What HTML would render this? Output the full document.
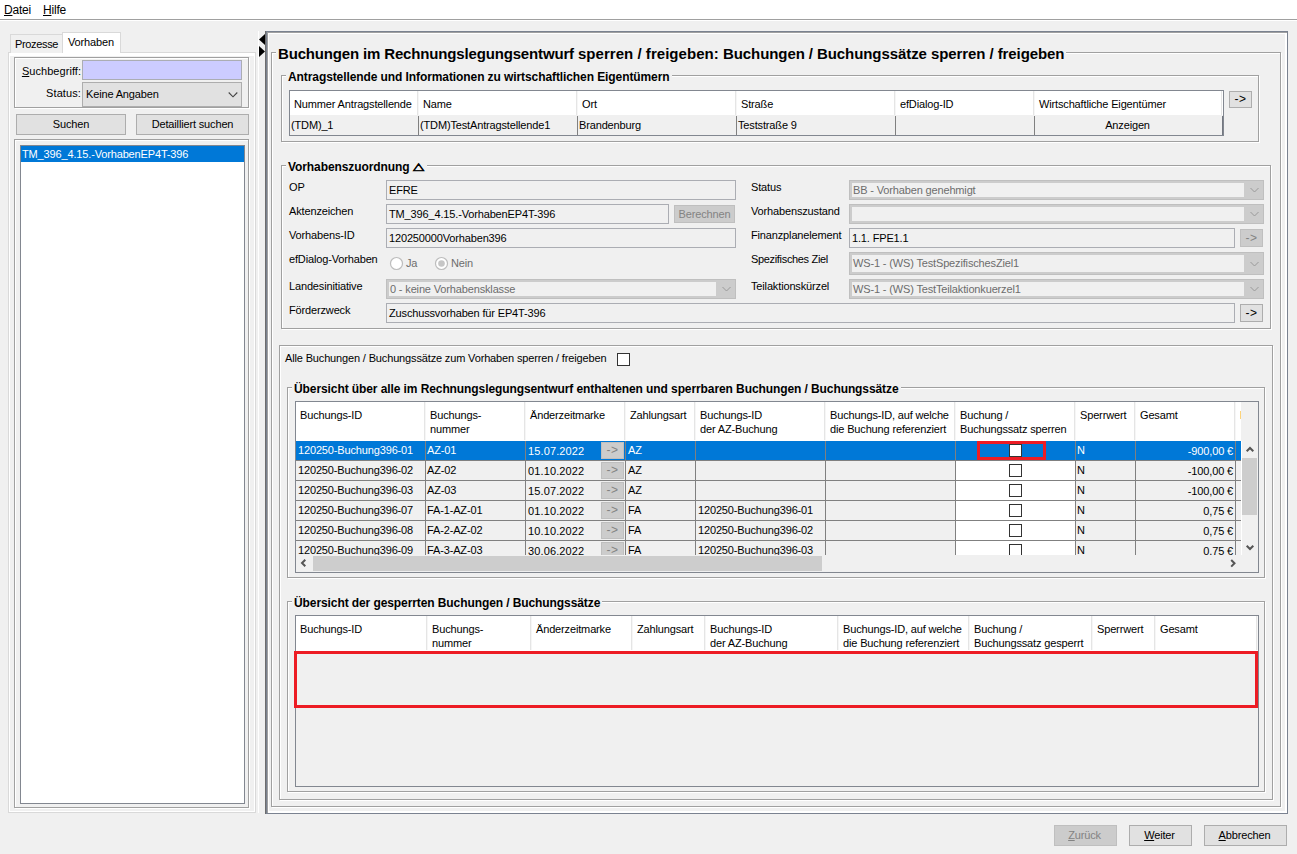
<!DOCTYPE html>
<html><head><meta charset="utf-8"><title>Buchungen sperren / freigeben</title>
<style>
html,body{margin:0;padding:0}
body{width:1297px;height:854px;background:#f0f0f0;position:relative;overflow:hidden;font-family:"Liberation Sans",sans-serif;font-size:11px;color:#000}
div,span,svg{position:absolute;box-sizing:border-box}
span{white-space:nowrap}
span span{position:static}
.t{font-size:11px;line-height:13px;letter-spacing:-0.15px}
.m{font-size:12px;line-height:14px;letter-spacing:-0.2px}
.b12{font-size:12px;line-height:14px;font-weight:bold;letter-spacing:-0.09px}
.b15{font-size:15px;line-height:17px;font-weight:bold;letter-spacing:-0.08px}
.ttl{background:#f0f0f0}
.etch{border:1px solid #a0a0a0;box-shadow:1px 1px 0 #fff, inset 1px 1px 0 #fff}
.btn{background:#e1e1e1;border:1px solid #adadad}
.btn.dis{background:#cccccc;border:1px solid #bfbfbf}
.fld{border:1px solid #abadb3;background:#f0f0f0}
.cb{background:#fff;border:1px solid #333}
u{text-decoration:underline}
</style></head>
<body>
<div style="left:0px;top:0px;width:1297px;height:19px;background:#fff"></div>
<div style="left:0px;top:19px;width:1297px;height:1px;background:#a0a0a0"></div>
<div style="left:0px;top:20px;width:1297px;height:1px;background:#fff"></div>
<span class="m" style="left:4px;top:3px;"><u>D</u>atei</span>
<span class="m" style="left:43px;top:3px;"><u>H</u>ilfe</span>
<div style="left:8px;top:52px;width:248px;height:761px;border:1px solid #d9d9d9;box-sizing:border-box;background:#f0f0f0"></div>
<div style="left:9px;top:53px;width:246px;height:3px;background:#fff"></div>
<div style="left:9px;top:53px;width:1px;height:759px;background:#fff"></div>
<div style="left:254px;top:53px;width:1px;height:759px;background:#fff"></div>
<div style="left:9px;top:811px;width:246px;height:1px;background:#fff"></div>
<div style="left:10px;top:34px;width:53px;height:19px;border:1px solid #d9d9d9;border-bottom:none;box-sizing:border-box;background:#f0f0f0"></div>
<div style="left:62px;top:32px;width:59px;height:21px;border:1px solid #d9d9d9;border-bottom:none;box-sizing:border-box;background:#fff"></div>
<div style="left:63px;top:52px;width:57px;height:4px;background:#fff"></div>
<span class="t" style="left:15px;top:38px;letter-spacing:-0.35px">Prozesse</span>
<span class="t" style="left:68px;top:36px;">Vorhaben</span>
<div class="etch" style="left:14px;top:57px;width:235px;height:51px;"></div>
<span class="t" style="right:1216px;top:65px;letter-spacing:0.05px"><u>S</u>uchbegriff:</span>
<span class="t" style="right:1216px;top:87px;letter-spacing:0.1px">Status:</span>
<div style="left:82px;top:60px;width:160px;height:20px;border:1px solid #abadb3;box-sizing:border-box;background:#ccccff"></div>
<div style="left:82px;top:82px;width:160px;height:25px;border:1px solid #adadad;box-sizing:border-box;background:#e1e1e1"></div>
<span class="t" style="left:86px;top:88px;">Keine Angaben</span>
<svg style="left:227px;top:91px" width="12" height="8" viewBox="0 0 12 8"><path d="M1.7 1.5 L6 5.8 L10.3 1.5" fill="none" stroke="#444" stroke-width="1.1"/></svg>
<div class="btn" style="left:16px;top:114px;width:110px;height:21px;"></div>
<span class="t" style="left:16px;width:110px;text-align:center;top:118px;">Suchen</span>
<div class="btn" style="left:136px;top:114px;width:113px;height:21px;"></div>
<span class="t" style="left:136px;width:113px;text-align:center;top:118px;">Detailliert suchen</span>
<div class="etch" style="left:14px;top:139px;width:235px;height:669px;"></div>
<div style="left:20px;top:145px;width:225px;height:659px;border:1px solid #828790;box-sizing:border-box;background:#fff"></div>
<div style="left:21px;top:146px;width:223px;height:16px;background:#0078d7"></div>
<span class="t" style="left:22px;top:148px;color:#fff">TM_396_4.15.-VorhabenEP4T-396</span>
<div style="left:258px;top:31px;width:1px;height:782px;background:#fff"></div>
<svg style="left:258px;top:33px" width="8" height="26" viewBox="0 0 8 26"><path d="M7 1 L7 12 L1 6.5 Z" fill="#000"/><path d="M1 13 L1 24 L7 18.5 Z" fill="#000"/></svg>
<div style="left:265px;top:31px;width:1px;height:783px;background:#6d6d6d"></div>
<div style="left:266px;top:31px;width:1022px;height:783px;border:1px solid #7a8290;box-sizing:border-box"></div>
<div style="left:267px;top:32px;width:1020px;height:1px;background:#a0a0a0"></div>
<div style="left:267px;top:32px;width:1px;height:781px;background:#a0a0a0"></div>
<div style="left:268px;top:33px;width:1019px;height:1px;background:#fff"></div>
<div style="left:268px;top:33px;width:1px;height:780px;background:#fff"></div>
<div style="left:1285px;top:33px;width:2px;height:780px;background:#fff"></div>
<div style="left:268px;top:811px;width:1019px;height:2px;background:#fff"></div>
<div class="etch" style="left:271px;top:52px;width:1010px;height:755px;"></div>
<span class="b15 ttl" style="left:276px;top:45px;padding:0 2px;"><span style="letter-spacing:-0.16px">Buchungen im Rechnungslegungsentwurf </span><span style="letter-spacing:0.04px">sperren / freigeben: </span>Buchungen / Buchungssätze sperren / freigeben</span>
<div class="etch" style="left:281px;top:75px;width:978px;height:67px;"></div>
<span class="b12 ttl" style="left:286px;top:70px;padding:0 2px;">Antragstellende und Informationen zu wirtschaftlichen Eigentümern</span>
<div style="left:289px;top:90px;width:935px;height:46px;border:1px solid #828790;box-sizing:border-box;background:#f0f0f0"></div>
<div style="left:290px;top:91px;width:933px;height:24px;background:#fff"></div>
<span class="t" style="left:294px;top:98px;">Nummer Antragstellende</span>
<span class="t" style="left:291px;top:119px;">(TDM)_1</span>
<span class="t" style="left:423px;top:98px;">Name</span>
<span class="t" style="left:420px;top:119px;">(TDM)TestAntragstellende1</span>
<div style="left:417px;top:91px;width:1px;height:24px;background:#e5e5e5"></div>
<div style="left:418px;top:91px;width:1px;height:24px;background:#f6f6f6"></div>
<div style="left:418px;top:116px;width:1px;height:19px;background:#808080"></div>
<span class="t" style="left:582px;top:98px;">Ort</span>
<span class="t" style="left:579px;top:119px;">Brandenburg</span>
<div style="left:576px;top:91px;width:1px;height:24px;background:#e5e5e5"></div>
<div style="left:577px;top:91px;width:1px;height:24px;background:#f6f6f6"></div>
<div style="left:577px;top:116px;width:1px;height:19px;background:#808080"></div>
<span class="t" style="left:741px;top:98px;">Straße</span>
<span class="t" style="left:738px;top:119px;">Teststraße 9</span>
<div style="left:735px;top:91px;width:1px;height:24px;background:#e5e5e5"></div>
<div style="left:736px;top:91px;width:1px;height:24px;background:#f6f6f6"></div>
<div style="left:736px;top:116px;width:1px;height:19px;background:#808080"></div>
<span class="t" style="left:900px;top:98px;">efDialog-ID</span>
<div style="left:894px;top:91px;width:1px;height:24px;background:#e5e5e5"></div>
<div style="left:895px;top:91px;width:1px;height:24px;background:#f6f6f6"></div>
<div style="left:895px;top:116px;width:1px;height:19px;background:#808080"></div>
<span class="t" style="left:1039px;top:98px;">Wirtschaftliche Eigentümer</span>
<div style="left:1033px;top:91px;width:1px;height:24px;background:#e5e5e5"></div>
<div style="left:1034px;top:91px;width:1px;height:24px;background:#f6f6f6"></div>
<div style="left:1034px;top:116px;width:1px;height:19px;background:#808080"></div>
<span class="t" style="left:1034px;width:187px;text-align:center;top:119px;">Anzeigen</span>
<div style="left:1222px;top:116px;width:1px;height:19px;background:#737780"></div>
<div class="btn" style="left:1229px;top:91px;width:23px;height:17px;"></div>
<span class="t" style="left:1229px;width:23px;text-align:center;top:93px;font-size:12px;letter-spacing:0.4px">-&gt;</span>
<div style="left:1221px;top:91px;width:1px;height:24px;background:#e5e5e5"></div>
<div class="etch" style="left:281px;top:165px;width:990px;height:164px;"></div>
<span class="b12 ttl" style="left:286px;top:160px;padding:0 2px;"><span>Vorhabenszuordnung </span><span style="font-family:'DejaVu Sans',sans-serif;font-size:10px;display:inline-block;transform:scaleX(1.45);transform-origin:0 100%;letter-spacing:0;width:12px;position:relative;top:-1px;-webkit-text-stroke:0.6px #000">△</span></span>
<span class="t" style="left:289px;top:181px;">OP</span>
<span class="t" style="left:289px;top:205px;">Aktenzeichen</span>
<span class="t" style="left:289px;top:229px;">Vorhabens-ID</span>
<span class="t" style="left:289px;top:253px;">efDialog-Vorhaben</span>
<span class="t" style="left:289px;top:280px;">Landesinitiative</span>
<span class="t" style="left:289px;top:304px;">Förderzweck</span>
<span class="t" style="left:751px;top:181px;">Status</span>
<span class="t" style="left:751px;top:205px;">Vorhabenszustand</span>
<span class="t" style="left:751px;top:229px;">Finanzplanelement</span>
<span class="t" style="left:751px;top:253px;letter-spacing:-0.33px">Spezifisches Ziel</span>
<span class="t" style="left:751px;top:280px;">Teilaktionskürzel</span>
<div class="fld" style="left:386px;top:180px;width:350px;height:20px;"></div>
<span class="t" style="left:389px;top:184px;">EFRE</span>
<div class="fld" style="left:386px;top:204px;width:283px;height:20px;"></div>
<span class="t" style="left:389px;top:208px;">TM_396_4.15.-VorhabenEP4T-396</span>
<div class="btn dis" style="left:674px;top:205px;width:61px;height:18px;"></div>
<span class="t" style="left:674px;width:61px;text-align:center;top:208px;color:#838383">Berechnen</span>
<div class="fld" style="left:386px;top:228px;width:350px;height:20px;"></div>
<span class="t" style="left:389px;top:232px;">120250000Vorhaben396</span>
<svg style="left:389px;top:256px" width="15" height="15" viewBox="0 0 15 15"><circle cx="7.5" cy="7.5" r="6" fill="#fff" stroke="#bdbdbd" stroke-width="1.2"/></svg>
<span class="t" style="left:406px;top:257px;color:#6d6d6d">Ja</span>
<svg style="left:434px;top:256px" width="15" height="15" viewBox="0 0 15 15"><circle cx="7.5" cy="7.5" r="6" fill="#fff" stroke="#bdbdbd" stroke-width="1.2"/><circle cx="7.5" cy="7.5" r="3.3" fill="#c6c6c6"/></svg>
<span class="t" style="left:451px;top:257px;color:#6d6d6d">Nein</span>
<div style="left:386px;top:279px;width:350px;height:20px;background:#cccccc;border:1px solid #bfbfbf"></div>
<div style="left:389px;top:282px;width:327px;height:14px;background:#f0f0f0"></div>
<span class="t" style="left:390px;top:283px;color:#6d6d6d">0 - keine Vorhabensklasse</span>
<svg style="left:721px;top:286px" width="11" height="7" viewBox="0 0 11 7"><path d="M1.5 1 L5.5 5 L9.5 1" fill="none" stroke="#9a9a9a" stroke-width="1"/></svg>
<div class="fld" style="left:386px;top:303px;width:849px;height:20px;"></div>
<span class="t" style="left:389px;top:307px;">Zuschussvorhaben für EP4T-396</span>
<div class="btn" style="left:1240px;top:304px;width:23px;height:18px;"></div>
<span class="t" style="left:1240px;width:23px;text-align:center;top:307px;font-size:12px;letter-spacing:0.4px">-&gt;</span>
<div style="left:849px;top:180px;width:415px;height:20px;background:#cccccc;border:1px solid #bfbfbf"></div>
<div style="left:852px;top:183px;width:392px;height:14px;background:#f0f0f0"></div>
<span class="t" style="left:853px;top:184px;color:#6d6d6d">BB - Vorhaben genehmigt</span>
<svg style="left:1249px;top:187px" width="11" height="7" viewBox="0 0 11 7"><path d="M1.5 1 L5.5 5 L9.5 1" fill="none" stroke="#9a9a9a" stroke-width="1"/></svg>
<div style="left:849px;top:204px;width:415px;height:20px;background:#cccccc;border:1px solid #bfbfbf"></div>
<div style="left:852px;top:207px;width:392px;height:14px;background:#f0f0f0"></div>
<svg style="left:1249px;top:211px" width="11" height="7" viewBox="0 0 11 7"><path d="M1.5 1 L5.5 5 L9.5 1" fill="none" stroke="#9a9a9a" stroke-width="1"/></svg>
<div class="fld" style="left:849px;top:228px;width:386px;height:20px;"></div>
<span class="t" style="left:852px;top:232px;">1.1. FPE1.1</span>
<div class="btn dis" style="left:1240px;top:229px;width:23px;height:18px;"></div>
<span class="t" style="left:1240px;width:23px;text-align:center;top:232px;color:#838383;font-size:12px;letter-spacing:0.4px">-&gt;</span>
<div style="left:849px;top:252px;width:415px;height:23px;background:#cccccc;border:1px solid #bfbfbf"></div>
<div style="left:852px;top:255px;width:392px;height:17px;background:#f0f0f0"></div>
<span class="t" style="left:853px;top:257px;color:#6d6d6d">WS-1 - (WS) TestSpezifischesZiel1</span>
<svg style="left:1249px;top:261px" width="11" height="7" viewBox="0 0 11 7"><path d="M1.5 1 L5.5 5 L9.5 1" fill="none" stroke="#9a9a9a" stroke-width="1"/></svg>
<div style="left:849px;top:279px;width:415px;height:20px;background:#cccccc;border:1px solid #bfbfbf"></div>
<div style="left:852px;top:282px;width:392px;height:14px;background:#f0f0f0"></div>
<span class="t" style="left:853px;top:283px;color:#6d6d6d">WS-1 - (WS) TestTeilaktionkuerzel1</span>
<svg style="left:1249px;top:286px" width="11" height="7" viewBox="0 0 11 7"><path d="M1.5 1 L5.5 5 L9.5 1" fill="none" stroke="#9a9a9a" stroke-width="1"/></svg>
<div class="etch" style="left:279px;top:345px;width:994px;height:455px;"></div>
<span class="t" style="left:285px;top:352px;">Alle Buchungen / Buchungssätze zum Vorhaben sperren / freigeben</span>
<div class="cb" style="left:617px;top:353px;width:13px;height:13px;"></div>
<div class="etch" style="left:287px;top:387px;width:978px;height:191px;"></div>
<span class="b12 ttl" style="left:292px;top:382px;padding:0 2px;">Übersicht über alle im Rechnungslegungsentwurf enthaltenen und sperrbaren Buchungen / Buchungssätze</span>
<div style="left:295px;top:401px;width:964px;height:172px;border:1px solid #828790;box-sizing:border-box;background:#f0f0f0"></div>
<div style="left:296px;top:402px;width:945px;height:39px;background:#fff"></div>
<span class="t" style="left:300px;top:409px;">Buchungs-ID</span>
<span class="t" style="left:430px;top:409px;">Buchungs-</span>
<span class="t" style="left:430px;top:423px;">nummer</span>
<span class="t" style="left:530px;top:409px;">Änderzeitmarke</span>
<span class="t" style="left:630px;top:409px;">Zahlungsart</span>
<span class="t" style="left:700px;top:409px;">Buchungs-ID</span>
<span class="t" style="left:700px;top:423px;">der AZ-Buchung</span>
<span class="t" style="left:830px;top:409px;">Buchungs-ID, auf welche</span>
<span class="t" style="left:830px;top:423px;">die Buchung referenziert</span>
<span class="t" style="left:960px;top:409px;">Buchung /</span>
<span class="t" style="left:960px;top:423px;">Buchungssatz sperren</span>
<span class="t" style="left:1080px;top:409px;">Sperrwert</span>
<span class="t" style="left:1140px;top:409px;">Gesamt</span>
<div style="left:424px;top:402px;width:1px;height:38px;background:#e5e5e5"></div>
<div style="left:425px;top:402px;width:1px;height:38px;background:#f6f6f6"></div>
<div style="left:524px;top:402px;width:1px;height:38px;background:#e5e5e5"></div>
<div style="left:525px;top:402px;width:1px;height:38px;background:#f6f6f6"></div>
<div style="left:624px;top:402px;width:1px;height:38px;background:#e5e5e5"></div>
<div style="left:625px;top:402px;width:1px;height:38px;background:#f6f6f6"></div>
<div style="left:694px;top:402px;width:1px;height:38px;background:#e5e5e5"></div>
<div style="left:695px;top:402px;width:1px;height:38px;background:#f6f6f6"></div>
<div style="left:824px;top:402px;width:1px;height:38px;background:#e5e5e5"></div>
<div style="left:825px;top:402px;width:1px;height:38px;background:#f6f6f6"></div>
<div style="left:954px;top:402px;width:1px;height:38px;background:#e5e5e5"></div>
<div style="left:955px;top:402px;width:1px;height:38px;background:#f6f6f6"></div>
<div style="left:1074px;top:402px;width:1px;height:38px;background:#e5e5e5"></div>
<div style="left:1075px;top:402px;width:1px;height:38px;background:#f6f6f6"></div>
<div style="left:1134px;top:402px;width:1px;height:38px;background:#e5e5e5"></div>
<div style="left:1135px;top:402px;width:1px;height:38px;background:#f6f6f6"></div>
<div style="left:1234px;top:402px;width:1px;height:38px;background:#e5e5e5"></div>
<div style="left:1235px;top:402px;width:1px;height:38px;background:#f6f6f6"></div>
<div style="left:1240px;top:411px;width:1px;height:8px;background:#fcd37b"></div>
<div style="left:296px;top:441px;width:945px;height:114px;overflow:hidden">
<div style="left:0px;top:0px;width:945px;height:19px;background:#0078d7"></div>
<div style="left:0px;top:19px;width:945px;height:1px;background:#808080"></div>
<span class="t" style="left:2px;top:3px;color:#fff">120250-Buchung396-01</span>
<span class="t" style="left:131px;top:3px;color:#fff">AZ-01</span>
<span class="t" style="left:232px;top:4px;color:#fff;letter-spacing:0.12px">15.07.2022</span>
<div class="btn dis" style="left:305px;top:1px;width:23px;height:17px;"></div>
<span class="t" style="left:305px;width:23px;text-align:center;top:3px;color:#838383;font-size:12px;letter-spacing:0.4px">-&gt;</span>
<span class="t" style="left:332px;top:3px;color:#fff">AZ</span>
<div class="cb" style="left:713px;top:3px;width:13px;height:13px;"></div>
<span class="t" style="left:781px;top:3px;color:#fff">N</span>
<span class="t" style="right:8px;top:4px;color:#fff">-900,00 €</span>
<div style="left:660px;top:20px;width:119px;height:19px;background:#fff"></div>
<div style="left:0px;top:39px;width:945px;height:1px;background:#808080"></div>
<span class="t" style="left:2px;top:23px;">120250-Buchung396-02</span>
<span class="t" style="left:131px;top:23px;">AZ-02</span>
<span class="t" style="left:232px;top:24px;;letter-spacing:0.12px">01.10.2022</span>
<div class="btn dis" style="left:305px;top:21px;width:23px;height:17px;"></div>
<span class="t" style="left:305px;width:23px;text-align:center;top:23px;color:#838383;font-size:12px;letter-spacing:0.4px">-&gt;</span>
<span class="t" style="left:332px;top:23px;">AZ</span>
<div class="cb" style="left:713px;top:23px;width:13px;height:13px;"></div>
<span class="t" style="left:781px;top:23px;">N</span>
<span class="t" style="right:8px;top:24px;">-100,00 €</span>
<div style="left:660px;top:40px;width:119px;height:19px;background:#fff"></div>
<div style="left:0px;top:59px;width:945px;height:1px;background:#808080"></div>
<span class="t" style="left:2px;top:43px;">120250-Buchung396-03</span>
<span class="t" style="left:131px;top:43px;">AZ-03</span>
<span class="t" style="left:232px;top:44px;;letter-spacing:0.12px">15.07.2022</span>
<div class="btn dis" style="left:305px;top:41px;width:23px;height:17px;"></div>
<span class="t" style="left:305px;width:23px;text-align:center;top:43px;color:#838383;font-size:12px;letter-spacing:0.4px">-&gt;</span>
<span class="t" style="left:332px;top:43px;">AZ</span>
<div class="cb" style="left:713px;top:43px;width:13px;height:13px;"></div>
<span class="t" style="left:781px;top:43px;">N</span>
<span class="t" style="right:8px;top:44px;">-100,00 €</span>
<div style="left:660px;top:60px;width:119px;height:19px;background:#fff"></div>
<div style="left:0px;top:79px;width:945px;height:1px;background:#808080"></div>
<span class="t" style="left:2px;top:63px;">120250-Buchung396-07</span>
<span class="t" style="left:131px;top:63px;">FA-1-AZ-01</span>
<span class="t" style="left:232px;top:64px;;letter-spacing:0.12px">01.10.2022</span>
<div class="btn dis" style="left:305px;top:61px;width:23px;height:17px;"></div>
<span class="t" style="left:305px;width:23px;text-align:center;top:63px;color:#838383;font-size:12px;letter-spacing:0.4px">-&gt;</span>
<span class="t" style="left:332px;top:63px;">FA</span>
<span class="t" style="left:402px;top:63px;">120250-Buchung396-01</span>
<div class="cb" style="left:713px;top:63px;width:13px;height:13px;"></div>
<span class="t" style="left:781px;top:63px;">N</span>
<span class="t" style="right:8px;top:64px;">0,75 €</span>
<div style="left:660px;top:80px;width:119px;height:19px;background:#fff"></div>
<div style="left:0px;top:99px;width:945px;height:1px;background:#808080"></div>
<span class="t" style="left:2px;top:83px;">120250-Buchung396-08</span>
<span class="t" style="left:131px;top:83px;">FA-2-AZ-02</span>
<span class="t" style="left:232px;top:84px;;letter-spacing:0.12px">10.10.2022</span>
<div class="btn dis" style="left:305px;top:81px;width:23px;height:17px;"></div>
<span class="t" style="left:305px;width:23px;text-align:center;top:83px;color:#838383;font-size:12px;letter-spacing:0.4px">-&gt;</span>
<span class="t" style="left:332px;top:83px;">FA</span>
<span class="t" style="left:402px;top:83px;">120250-Buchung396-02</span>
<div class="cb" style="left:713px;top:83px;width:13px;height:13px;"></div>
<span class="t" style="left:781px;top:83px;">N</span>
<span class="t" style="right:8px;top:84px;">0,75 €</span>
<div style="left:660px;top:100px;width:119px;height:19px;background:#fff"></div>
<div style="left:0px;top:119px;width:945px;height:1px;background:#808080"></div>
<span class="t" style="left:2px;top:103px;">120250-Buchung396-09</span>
<span class="t" style="left:131px;top:103px;">FA-3-AZ-03</span>
<span class="t" style="left:232px;top:104px;;letter-spacing:0.12px">30.06.2022</span>
<div class="btn dis" style="left:305px;top:101px;width:23px;height:17px;"></div>
<span class="t" style="left:305px;width:23px;text-align:center;top:103px;color:#838383;font-size:12px;letter-spacing:0.4px">-&gt;</span>
<span class="t" style="left:332px;top:103px;">FA</span>
<span class="t" style="left:402px;top:103px;">120250-Buchung396-03</span>
<div class="cb" style="left:713px;top:103px;width:13px;height:13px;"></div>
<span class="t" style="left:781px;top:103px;">N</span>
<span class="t" style="right:8px;top:104px;">0,75 €</span>
<div style="left:129px;top:0px;width:1px;height:115px;background:#808080"></div>
<div style="left:229px;top:0px;width:1px;height:115px;background:#808080"></div>
<div style="left:329px;top:0px;width:1px;height:115px;background:#808080"></div>
<div style="left:399px;top:0px;width:1px;height:115px;background:#808080"></div>
<div style="left:529px;top:0px;width:1px;height:115px;background:#808080"></div>
<div style="left:659px;top:0px;width:1px;height:115px;background:#808080"></div>
<div style="left:779px;top:0px;width:1px;height:115px;background:#808080"></div>
<div style="left:839px;top:0px;width:1px;height:115px;background:#808080"></div>
<div style="left:939px;top:0px;width:1px;height:115px;background:#808080"></div>
<div style="left:681px;top:0px;width:69px;height:19px;border:3px solid #ed1c24;box-sizing:border-box"></div>
</div>
<div style="left:1241px;top:402px;width:17px;height:153px;background:#f0f0f0"></div>
<div style="left:1241px;top:441px;width:1px;height:114px;background:#fff"></div>
<div style="left:1242px;top:458px;width:15px;height:57px;background:#cdcdcd"></div>
<svg style="left:1245px;top:445px" width="10" height="9" viewBox="0 0 10 9"><path d="M1.7 6.3 L5 3 L8.3 6.3" fill="none" stroke="#555" stroke-width="2"/></svg>
<svg style="left:1245px;top:543px" width="10" height="9" viewBox="0 0 10 9"><path d="M1.7 2.7 L5 6 L8.3 2.7" fill="none" stroke="#555" stroke-width="2"/></svg>
<div style="left:296px;top:555px;width:962px;height:17px;background:#f0f0f0"></div>
<div style="left:313px;top:556px;width:509px;height:15px;background:#cdcdcd"></div>
<svg style="left:299px;top:558px" width="9" height="10" viewBox="0 0 9 10"><path d="M6.3 1.7 L3 5 L6.3 8.3" fill="none" stroke="#555" stroke-width="2"/></svg>
<svg style="left:1228px;top:558px" width="9" height="10" viewBox="0 0 9 10"><path d="M3.2 2 L6.5 5.3 L3.2 8.6" fill="none" stroke="#555" stroke-width="2"/></svg>
<div class="etch" style="left:287px;top:601px;width:978px;height:191px;"></div>
<span class="b12 ttl" style="left:292px;top:596px;padding:0 2px;">Übersicht der gesperrten Buchungen / Buchungssätze</span>
<div style="left:295px;top:615px;width:964px;height:172px;border:1px solid #828790;box-sizing:border-box;background:#f0f0f0"></div>
<div style="left:296px;top:616px;width:962px;height:35px;background:#fff"></div>
<span class="t" style="left:300px;top:623px;">Buchungs-ID</span>
<span class="t" style="left:432px;top:623px;">Buchungs-</span>
<span class="t" style="left:432px;top:637px;">nummer</span>
<span class="t" style="left:536px;top:623px;">Änderzeitmarke</span>
<span class="t" style="left:637px;top:623px;">Zahlungsart</span>
<span class="t" style="left:710px;top:623px;">Buchungs-ID</span>
<span class="t" style="left:710px;top:637px;">der AZ-Buchung</span>
<span class="t" style="left:843px;top:623px;">Buchungs-ID, auf welche</span>
<span class="t" style="left:843px;top:637px;">die Buchung referenziert</span>
<span class="t" style="left:974px;top:623px;">Buchung /</span>
<span class="t" style="left:974px;top:637px;">Buchungssatz gesperrt</span>
<span class="t" style="left:1097px;top:623px;">Sperrwert</span>
<span class="t" style="left:1160px;top:623px;">Gesamt</span>
<div style="left:426px;top:616px;width:1px;height:34px;background:#e5e5e5"></div>
<div style="left:427px;top:616px;width:1px;height:34px;background:#f6f6f6"></div>
<div style="left:530px;top:616px;width:1px;height:34px;background:#e5e5e5"></div>
<div style="left:531px;top:616px;width:1px;height:34px;background:#f6f6f6"></div>
<div style="left:631px;top:616px;width:1px;height:34px;background:#e5e5e5"></div>
<div style="left:632px;top:616px;width:1px;height:34px;background:#f6f6f6"></div>
<div style="left:704px;top:616px;width:1px;height:34px;background:#e5e5e5"></div>
<div style="left:705px;top:616px;width:1px;height:34px;background:#f6f6f6"></div>
<div style="left:837px;top:616px;width:1px;height:34px;background:#e5e5e5"></div>
<div style="left:838px;top:616px;width:1px;height:34px;background:#f6f6f6"></div>
<div style="left:968px;top:616px;width:1px;height:34px;background:#e5e5e5"></div>
<div style="left:969px;top:616px;width:1px;height:34px;background:#f6f6f6"></div>
<div style="left:1091px;top:616px;width:1px;height:34px;background:#e5e5e5"></div>
<div style="left:1092px;top:616px;width:1px;height:34px;background:#f6f6f6"></div>
<div style="left:1154px;top:616px;width:1px;height:34px;background:#e5e5e5"></div>
<div style="left:1155px;top:616px;width:1px;height:34px;background:#f6f6f6"></div>
<div style="left:1256px;top:616px;width:1px;height:34px;background:#e5e5e5"></div>
<div style="left:1257px;top:616px;width:1px;height:34px;background:#f6f6f6"></div>
<div style="left:294px;top:651px;width:964px;height:57px;border:3px solid #ed1c24;box-sizing:border-box"></div>
<div class="btn dis" style="left:1054px;top:825px;width:63px;height:21px;"></div>
<span class="t" style="left:1053px;width:63px;text-align:center;top:829px;color:#838383"><u>Z</u>urück</span>
<div class="btn" style="left:1129px;top:825px;width:63px;height:21px;"></div>
<span class="t" style="left:1128px;width:63px;text-align:center;top:829px;"><u>W</u>eiter</span>
<div class="btn" style="left:1204px;top:825px;width:83px;height:21px;"></div>
<span class="t" style="left:1203px;width:83px;text-align:center;top:829px;"><u>A</u>bbrechen</span>
</body></html>
